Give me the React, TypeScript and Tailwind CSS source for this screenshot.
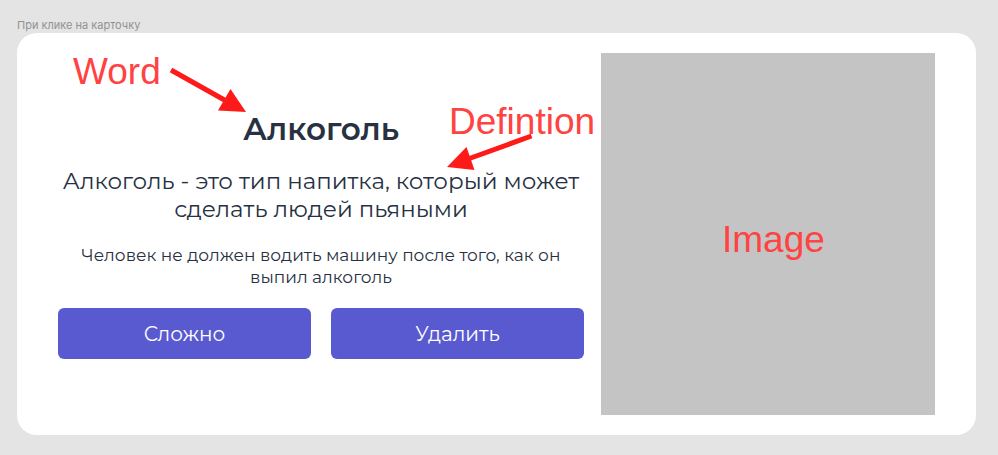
import type { ReactNode } from "react";

function Note({ className, children }: { className: string; children: ReactNode }) {
  return (
    <span
      className={`absolute whitespace-nowrap font-['Liberation_Sans',sans-serif] text-[37px] leading-[38px] text-[#ff4242] ${className}`}
    >
      {children}
    </span>
  );
}

function ActionButton({ children }: { children: ReactNode }) {
  return (
    <button
      type="button"
      className="h-[51px] flex-1 rounded-md bg-[#5a5ad0] text-xl text-white"
    >
      {children}
    </button>
  );
}

function Arrows() {
  return (
    <svg
      className="pointer-events-none absolute left-[150px] top-[30px]"
      width="370"
      height="110"
      viewBox="167 63 370 110"
      fill="#ff1a1a"
      aria-hidden="true"
    >
      <path d="M171 70 L228 102" stroke="#ff1a1a" strokeWidth="5" />
      <path d="M246 112 L230.500 89 L218 110.500 Z" />
      <path d="M531.500 136 L468 159" stroke="#ff1a1a" strokeWidth="5" />
      <path d="M447 167 L466.500 147 L474.500 170 Z" />
    </svg>
  );
}

export default function App() {
  return (
    <main className="min-h-screen bg-[#e4e4e4] pb-5 pl-[17px] pr-[22px] pt-[18px] font-['Inter',sans-serif] text-[#273142]">
      <p className="text-[11px] leading-[15px] text-[#929292]">При клике на карточку</p>
      <article className="relative flex gap-[17px] rounded-[20px] bg-white px-[41px] py-5">
        <section className="min-w-0 flex-1 pt-14 text-center font-['Montserrat','Inter',sans-serif]">
          <h1 className="text-[31px] font-semibold leading-10">Алкоголь</h1>
          <p className="mt-[18px] text-[23px] leading-7">
            Алкоголь - это тип напитка, который может сделать людей пьяными
          </p>
          <p className="mt-[21px] px-4 text-[17px] leading-[22px]">
            Человек не должен водить машину после того, как он выпил алкоголь
          </p>
          <div className="mt-5 flex gap-5">
            <ActionButton>Сложно</ActionButton>
            <ActionButton>Удалить</ActionButton>
          </div>
        </section>
        <div className="relative h-[362px] w-[334px] shrink-0 bg-[#c4c4c4]">
          <Note className="left-[121px] top-[168px]">Image</Note>
        </div>
        <Note className="left-14 top-5">Word</Note>
        <Note className="left-[432px] top-[70px]">Defintion</Note>
        <Arrows />
      </article>
    </main>
  );
}
